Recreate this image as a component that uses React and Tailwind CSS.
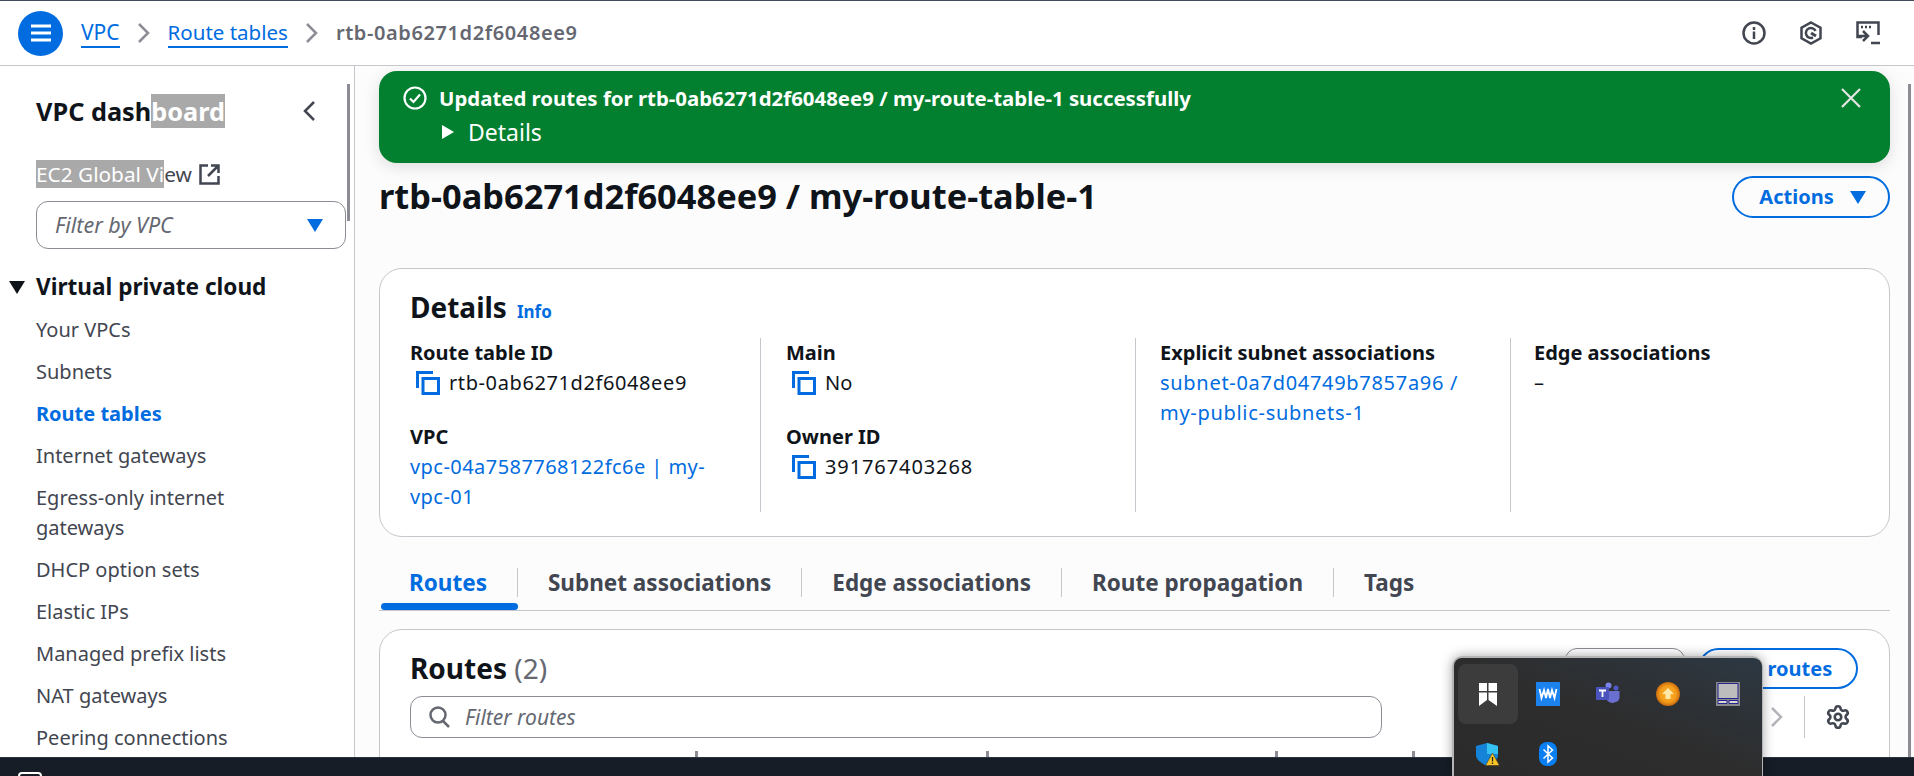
import React from 'react';
import { Settings } from 'lucide-react';

const navItems = ['Your VPCs', 'Subnets', 'Route tables', 'Internet gateways', 'Egress-only internet gateways', 'DHCP option sets', 'Elastic IPs', 'Managed prefix lists', 'NAT gateways', 'Peering connections'];
const tabs = ['Routes', 'Subnet associations', 'Edge associations', 'Route propagation', 'Tags'];

const CopyIcon = () => (
  <svg width="24" height="24" viewBox="0 0 24 24" fill="none" stroke="#006ce0" strokeWidth="3" className="shrink-0">
    <path d="M1.5 17V1.5H17" />
    <rect x="7" y="7.5" width="15.5" height="15" />
  </svg>
);

const Caret = ({ className }) => (
  <svg width="16" height="13" viewBox="0 0 16 13" className={className}>
    <path d="M0 0h16L8 13z" fill="currentColor" />
  </svg>
);

const Field = ({ label, children, className = '' }) => (
  <div className={className}>
    <div className="font-bold text-[#0f141a]">{label}</div>
    {children}
  </div>
);

const CopyValue = ({ children, className = '' }) => (
  <div className="flex items-center gap-[9px] pl-[6px] text-[#0f141a]">
    <CopyIcon />
    <span className={className}>{children}</span>
  </div>
);

const TrayIcons = () => (
  <div className="grid auto-rows-[60px] grid-cols-[repeat(5,60px)] pt-[6px] pl-[4px]">
    <div className="flex items-center justify-center rounded-lg bg-[#3c3c3c]">
      <svg width="20" height="24" viewBox="0 0 20 24" fill="#fff">
        <path d="M1 1h8v8H1zM10.500 1H19v8h-8.500zM1 10.500h8V18l-8 6zM10.500 10.500H19V24l-8.500-6z" />
      </svg>
    </div>
    <div className="flex items-center justify-center">
      <svg width="24" height="24" viewBox="0 0 24 24">
        <rect width="24" height="24" fill="#1b82ee" />
        <path d="M3.500 7l2 9L8 8l2 8 2-9 2 9 2-8 2.500 8 2-9" fill="none" stroke="#fff" strokeWidth="1.800" />
      </svg>
    </div>
    <div className="flex items-center justify-center">
      <svg width="24" height="24" viewBox="0 0 24 24">
        <circle cx="12.500" cy="3.500" r="3" fill="#7b83eb" />
        <circle cx="20" cy="6" r="2.500" fill="#5059c9" />
        <path d="M10 9h13.500v6a5 5 0 0 1-4 5 6.500 6.500 0 0 1-9.500-4z" fill="#6a70d0" />
        <rect x="0" y="5" width="13" height="13" rx="1" fill="#4b53bc" />
        <path d="M3 8.500h7M6.500 8.500V15" stroke="#fff" strokeWidth="1.800" />
      </svg>
    </div>
    <div className="flex items-center justify-center">
      <svg width="24" height="24" viewBox="0 0 24 24">
        <defs>
          <radialGradient id="orangeGlow">
            <stop offset="0" stopColor="#ffb52e" />
            <stop offset=".7" stopColor="#f39a1a" />
            <stop offset="1" stopColor="#c46a10" />
          </radialGradient>
        </defs>
        <circle cx="12" cy="12" r="12" fill="url(#orangeGlow)" />
        <path d="M12 6l6 6h-3.500v5h-5v-5H6z" fill="#ffe9a8" />
      </svg>
    </div>
    <div className="flex items-center justify-center">
      <svg width="24" height="24" viewBox="0 0 24 24">
        <rect width="24" height="24" fill="#8a8a8a" />
        <rect x="2" y="1.500" width="20" height="15" fill="#bdbdbd" stroke="#24248c" />
        <path d="M2 21.500v-3h9v3zM13 21.500v-3h9v3z" fill="#d8d8d8" stroke="#24248c" />
      </svg>
    </div>
    <div className="flex items-center justify-center">
      <svg width="24" height="24" viewBox="0 0 24 24">
        <path d="M11 1l11 3v9c0 4-3 7-11 11C3 20 0 17 0 13V4z" fill="#1584d8" />
        <path d="M11 1l11 3v8H11z" fill="#35c1f1" />
        <path d="M16.500 11l7 12.500h-14z" fill="#f7c325" stroke="#222" strokeWidth=".5" />
        <path d="M16.500 15v4.500M16.500 20.500v1.500" stroke="#222" strokeWidth="1.300" />
      </svg>
    </div>
    <div className="flex items-center justify-center">
      <svg width="18" height="24" viewBox="0 0 18 24">
        <rect width="18" height="24" rx="8" fill="#0a7ff2" />
        <path d="M4.500 7.500l9 8.500L9 20V4l4.500 4-9 8.500" fill="none" stroke="#fff" strokeWidth="1.500" />
      </svg>
    </div>
  </div>
);

export default function App() {
  return (
    <div className="relative flex h-screen flex-col overflow-hidden bg-white font-['Noto_Sans',sans-serif] text-[20px] leading-[30px] text-[#424650]">
      {/* top bar */}
      <header className="flex h-[66px] shrink-0 items-center justify-between border-t border-b border-t-[#414d5c] border-b-[#c6c6cd] pr-[34px] pl-[18px]">
        <div className="flex items-center">
          <button className="flex h-[45px] w-[45px] items-center justify-center rounded-full bg-[#006ce0]">
            <svg width="22" height="20" viewBox="0 0 22 20" stroke="#fff" strokeWidth="3">
              <path d="M1 3h20M1 10h20M1 17h20" />
            </svg>
          </button>
          <span className="ml-[18px] border-b-2 border-[#006ce0] text-[21px] leading-[28px] text-[#006ce0]">VPC</span>
          <svg width="12" height="20" viewBox="0 0 12 20" fill="none" stroke="#8c8c94" strokeWidth="2.500" className="mx-[18px]">
            <path d="M1 1l9 9-9 9" />
          </svg>
          <span className="border-b-2 border-[#006ce0] text-[20.500px] leading-[28px] text-[#006ce0]">Route tables</span>
          <svg width="12" height="20" viewBox="0 0 12 20" fill="none" stroke="#8c8c94" strokeWidth="2.500" className="mx-[18px]">
            <path d="M1 1l9 9-9 9" />
          </svg>
          <span className="font-semibold tracking-[0.6px] text-[#656871]">rtb-0ab6271d2f6048ee9</span>
        </div>
        <div className="flex items-center gap-[33px]">
          <svg width="24" height="24" viewBox="0 0 24 24" fill="none" stroke="#424650" strokeWidth="2.500">
            <circle cx="12" cy="12" r="10.500" />
            <path d="M12 10.500V18M12 6v3" />
          </svg>
          <svg width="24" height="24" viewBox="0 0 24 24" fill="none" stroke="#424650" strokeWidth="2.500">
            <path d="M12 1.500l9.500 5.250v10.500L12 22.500l-9.500-5.250V6.750z" />
            <path d="M16.500 10A5 5 0 1 0 14 16.500" />
            <path d="M12 12l5 3" strokeWidth="3" />
          </svg>
          <svg width="24" height="24" viewBox="0 0 24 24" fill="none" stroke="#424650" strokeWidth="2.500">
            <path d="M6 16H1.500V1.500h21V14" />
            <path d="M5 6h2M9 6h2M13 6h2" />
            <path d="M7 10l5 5-5 5M1 15h11M15 22h9" />
          </svg>
        </div>
      </header>

      <div className="flex min-h-0 flex-1">
        {/* side nav */}
        <aside className="relative w-[355px] shrink-0 overflow-hidden border-r border-[#c6c6cd] pt-[28px]">
          <div className="absolute top-[18px] right-[4px] h-[137px] w-[3px] bg-[#8c8c94]" />
          <div className="flex h-[34px] items-center pr-[38px] pl-[36px]">
            <span className="text-[25.300px] leading-[34px] font-bold text-[#0f141a]">
              VPC dash<span className="bg-[#a9a9a9] text-white">board</span>
            </span>
            <svg width="13" height="22" viewBox="0 0 13 22" fill="none" stroke="#424650" strokeWidth="2.500" className="ml-auto">
              <path d="M11 2l-9 9 9 9" />
            </svg>
          </div>
          <div className="mt-[33px] flex h-[26px] items-center pl-[36px]">
            <span className="text-[20.800px] leading-[26px]">
              <span className="bg-[#a9a9a9] text-white">EC2 Global Vi</span>ew
            </span>
            <svg width="21" height="21" viewBox="0 0 21 21" fill="none" stroke="#424650" strokeWidth="2.500" className="ml-[7px]">
              <path d="M9 1.500H1.500v18h18V12M12 1.500h7.500V9M19 2L9 12" />
            </svg>
          </div>
          <div className="mt-[14px] ml-[36px] flex h-[48px] w-[310px] items-center justify-between rounded-[12px] border border-[#8c8c94] pr-[22px] pl-[18px]">
            <span className="text-[21.500px] text-[#656871] italic">Filter by VPC</span>
            <Caret className="text-[#006ce0]" />
          </div>
          <div className="relative mt-[23px] pl-[36px] text-[22.600px] leading-[30px] font-bold text-[#0f141a]">
            <Caret className="absolute top-[9px] left-[9px] text-[#0f141a]" />
            Virtual private cloud
          </div>
          <nav className="mt-[13px] flex w-[310px] flex-col gap-[12px] pl-[36px]">
            {navItems.map((item) => (
              <a key={item} className={item === 'Route tables' ? 'font-bold text-[#006ce0]' : ''}>
                {item}
              </a>
            ))}
          </nav>
        </aside>

        {/* main content */}
        <main className="relative min-w-0 flex-1 overflow-hidden bg-[#fcfcfd] pt-[5px] pr-[24px] pl-[24px]">
          <div className="absolute top-[18px] right-[3px] bottom-0 w-[3px] bg-[#8c8c94]" />
          <div className="flex h-[92px] rounded-[18px] bg-[#03802f] pt-[12px] pr-[29px] pl-[24px] text-white shadow-[0_4px_16px_rgba(0,0,0,0.12)]">
            <svg width="24" height="24" viewBox="0 0 24 24" fill="none" stroke="#fff" strokeWidth="2.200" className="mt-[3px] shrink-0">
              <circle cx="12" cy="12" r="10.500" />
              <path d="M7 12.500l3.500 3.500L17 8.500" />
            </svg>
            <div className="ml-[12px]">
              <div className="text-[20.400px] font-bold">Updated routes for rtb-0ab6271d2f6048ee9 / my-route-table-1 successfully</div>
              <div className="mt-[4px] flex items-center">
                <svg width="12" height="14" viewBox="0 0 12 14" className="ml-[3px]" fill="#fff">
                  <path d="M0 0l12 7-12 7z" />
                </svg>
                <span className="ml-[14px] text-[23px]">Details</span>
              </div>
            </div>
            <svg width="20" height="20" viewBox="0 0 20 20" stroke="#e5e5e5" strokeWidth="2.200" className="mt-[5px] ml-auto">
              <path d="M1 1l18 18M19 1L1 19" />
            </svg>
          </div>

          <div className="mt-[13px] flex h-[42px] items-center justify-between">
            <h1 className="pb-[2px] text-[34.400px] leading-[42px] font-bold text-[#0f141a]">rtb-0ab6271d2f6048ee9 / my-route-table-1</h1>
            <button className="flex h-[42px] w-[158px] items-center justify-center gap-[16px] rounded-full border-[2.5px] border-[#006ce0] pl-[3px] font-bold text-[#006ce0]">
              Actions
              <Caret />
            </button>
          </div>

          {/* details card */}
          <section className="mt-[50px] h-[269px] rounded-[23px] border border-[#c6c6cd] bg-white pt-[20px] pl-[30px]">
            <div className="flex h-[36px] items-baseline">
              <h2 className="text-[28px] leading-[36px] font-bold text-[#0f141a]">Details</h2>
              <span className="ml-[10px] text-[17px] font-bold text-[#006ce0]">Info</span>
            </div>
            <div className="mt-[13px] grid h-[174px] grid-cols-[351px_375px_375px_1fr]">
              <div className="border-r border-[#c6c6cd] pr-[25px]">
                <Field label="Route table ID">
                  <CopyValue className="tracking-[0.6px]">rtb-0ab6271d2f6048ee9</CopyValue>
                </Field>
                <Field label="VPC" className="mt-[24px]">
                  <span className="tracking-[0.45px] text-[#006ce0]">
                    vpc-04a7587768122fc6e | my-
                    <br />
                    vpc-01
                  </span>
                </Field>
              </div>
              <div className="border-r border-[#c6c6cd] pl-[25px]">
                <Field label="Main">
                  <CopyValue>No</CopyValue>
                </Field>
                <Field label="Owner ID" className="mt-[24px]">
                  <CopyValue className="tracking-[0.9px]">391767403268</CopyValue>
                </Field>
              </div>
              <div className="border-r border-[#c6c6cd] pr-[25px] pl-[24px]">
                <Field label="Explicit subnet associations">
                  <span className="tracking-[0.7px] text-[#006ce0]">
                    subnet-0a7d04749b7857a96 /
                    <br />
                    my-public-subnets-1
                  </span>
                </Field>
              </div>
              <div className="pl-[23px]">
                <Field label="Edge associations">
                  <span className="text-[#0f141a]">–</span>
                </Field>
              </div>
            </div>
          </section>

          {/* tabs */}
          <div className="mt-[31px] flex border-b border-[#c6c6cd] text-[22.500px] font-bold">
            {tabs.map((tab, i) => (
              <div key={tab} className="flex flex-col">
                <div className={`h-[29px] px-[30px] leading-[29px] ${i < tabs.length - 1 ? 'border-r border-[#c6c6cd]' : ''} ${i === 0 ? 'text-[#006ce0]' : ''}`}>{tab}</div>
                <div className={`mt-[6px] h-[7px] ${i === 0 ? 'ml-[2px] rounded-[4px] bg-[#006ce0]' : ''}`} />
              </div>
            ))}
          </div>

          {/* routes card */}
          <section className="mt-[18px] h-[300px] rounded-[23px] border border-[#c6c6cd] bg-white pt-[18px] pr-[31px] pl-[30px]">
            <div className="flex items-start justify-between">
              <h2 className="mt-[2px] text-[28px] leading-[36px] font-bold text-[#0f141a]">
                Routes <span className="font-normal text-[#656871]">(2)</span>
              </h2>
              <div className="flex gap-[13px]">
                <button className="h-[41px] w-[120px] rounded-[12px] border border-[#8c8c94]" />
                <button className="h-[41px] w-[160px] rounded-full border-[2.5px] border-[#006ce0] font-bold text-[#006ce0]">Edit routes</button>
              </div>
            </div>
            <div className="mt-[7px] flex h-[42px] items-center">
              <div className="flex h-[42px] w-[972px] items-center rounded-[12px] border border-[#8c8c94] pl-[18px]">
                <svg width="21" height="22" viewBox="0 0 21 22" fill="none" stroke="#656871" strokeWidth="2.500">
                  <circle cx="9" cy="9" r="7.500" />
                  <path d="M14 15l6 6" />
                </svg>
                <span className="ml-[15px] text-[21px] text-[#656871] italic">Filter routes</span>
              </div>
              <svg width="12" height="20" viewBox="0 0 12 20" fill="none" stroke="#b4b4bb" strokeWidth="2.500" className="ml-[389px]">
                <path d="M1 1l9 9-9 9" />
              </svg>
              <div className="ml-[21px] h-[42px] w-px bg-[#c6c6cd]" />
              <Settings size={26} strokeWidth={2.4} color="#424650" className="ml-[20px]" />
            </div>
            <div className="mt-[13px] grid h-[10px] grid-cols-[288px_291px_289px_137px]">
              <div className="border-r-[3px] border-[#8c8c94]" />
              <div className="border-r-[3px] border-[#8c8c94]" />
              <div className="border-r-[3px] border-[#8c8c94]" />
              <div className="border-r-[3px] border-[#8c8c94]" />
            </div>
          </section>
        </main>
      </div>

      {/* windows taskbar */}
      <footer className="h-[19px] shrink-0 overflow-hidden border-t border-[#2a3340] bg-[#161d26] pt-[14px] pl-[18px]">
        <div className="h-[20px] w-[24px] rounded-[4px] border-2 border-white" />
      </footer>

      {/* tray popup */}
      <div className="absolute right-[151px] bottom-0 h-[120px] w-[311px] overflow-hidden rounded-t-[10px] border-t-2 border-r border-l-2 border-[#b5b5b5] bg-gradient-to-tr from-[#2b2b2b] via-[#2d2d2d] to-[#2d3843] shadow-[0_0_12px_rgba(0,0,0,0.35)]">
        <TrayIcons />
      </div>
    </div>
  );
}
